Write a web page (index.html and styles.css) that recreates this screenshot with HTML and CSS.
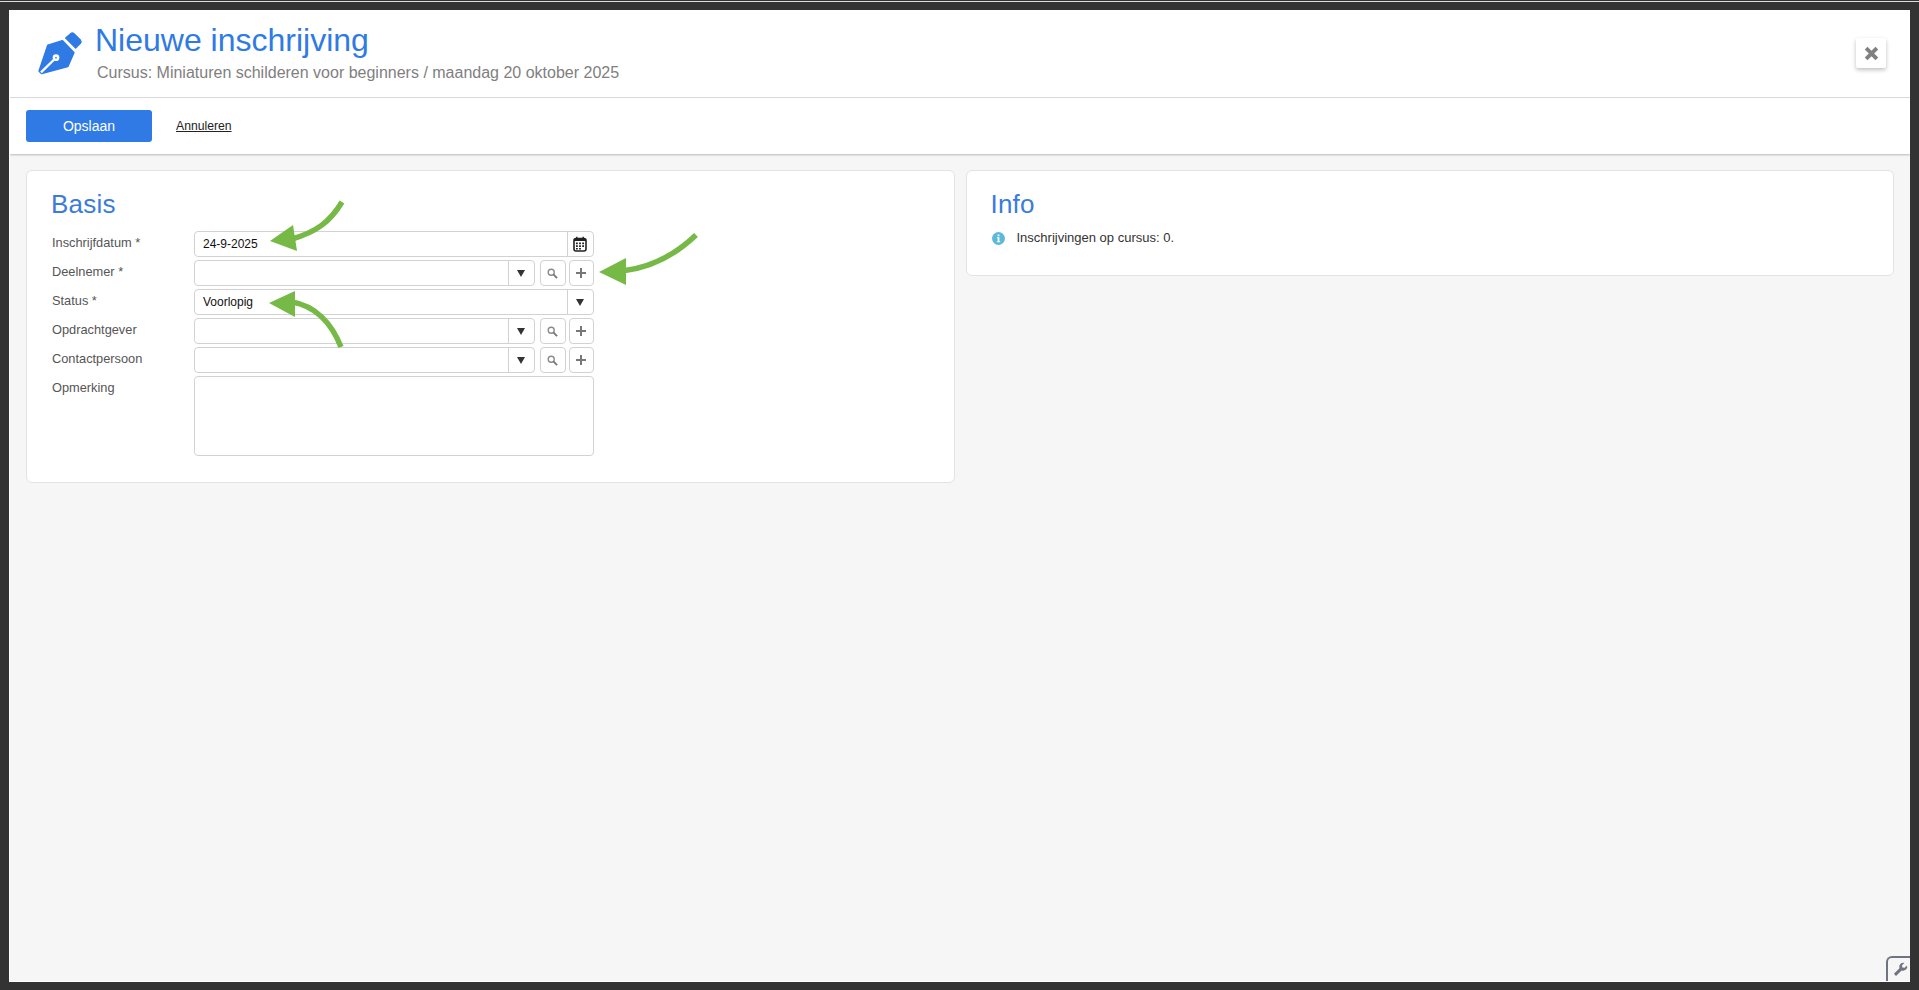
FILE: index.html
```html
<!DOCTYPE html>
<html>
  <head>
    <title>Nieuwe inschrijving</title>
    <link rel="stylesheet" href="styles.css">
  </head>
  <body>
    <div class="window">
      <div class="page-header">
        <svg class="page-icon" viewBox="0 0 210 210">
          <path d="M122 54 L137 41 Q142 37 147 41 L166 60 Q170 65 166 70 L152 84 Z" fill="#2f7ae5" stroke="#2f7ae5" stroke-width="4" stroke-linejoin="round"/>
          <path d="M69 76 L112 63 L146 98 L128 139 L50 160 L43 153 Z" fill="#2f7ae5" stroke="#2f7ae5" stroke-width="6" stroke-linejoin="round"/>
          <path d="M48 157 L86 120" stroke="#fff" stroke-width="7"/>
          <circle cx="93" cy="113" r="10" fill="#fff"/>
          <circle cx="93" cy="113" r="2.5" fill="#2f7ae5"/>
        </svg>
        <div class="page-titles">
          <h1>Nieuwe inschrijving</h1>
          <div class="subtitle">Cursus: Miniaturen schilderen voor beginners / maandag 20 oktober 2025</div>
        </div>
        <button class="close-btn" type="button">
          <svg viewBox="0 0 14 14" width="15" height="15"><path d="M2 2 L12 12 M12 2 L2 12" stroke="#808080" stroke-width="3.6"/></svg>
        </button>
      </div>

      <div class="toolbar">
        <button class="btn-primary" type="button">Opslaan</button>
        <a class="cancel-link" href="#">Annuleren</a>
      </div>

      <div class="content">
        <section class="card">
          <h2>Basis</h2>
          <form class="form">
            <label>Inschrijfdatum *</label>
            <div class="field">
              <div class="input-box">
                <span class="value">24-9-2025</span>
                <span class="addon">
                  <svg viewBox="0 0 14 16" width="14" height="16">
                    <rect x="1" y="2.5" width="12" height="12.5" rx="2" fill="none" stroke="#222" stroke-width="1.6"/>
                    <path d="M1 4h12" stroke="#222" stroke-width="2"/>
                    <path d="M3.8 .8v2.6M10.2 .8v2.6" stroke="#222" stroke-width="1.4"/>
                    <path d="M3 6.4h1.8v1.8H3zM6.1 6.4h1.8v1.8H6.1zM9.2 6.4H11v1.8H9.2zM3 9.3h1.8v1.8H3zM6.1 9.3h1.8v1.8H6.1zM9.2 9.3H11v1.8H9.2zM6.1 12h1.8v1.6H6.1zM3 12h1.8v1.6H3z" fill="#222"/>
                  </svg>
                </span>
              </div>
            </div>

            <label>Deelnemer *</label>
            <div class="field">
              <div class="input-box"><span class="value"></span><span class="addon"><i class="caret"></i></span></div>
              <span class="icon-btn search-btn"><svg viewBox="0 0 12 12" width="11" height="11"><circle cx="4.6" cy="4.6" r="3.3" fill="none" stroke="#8a8a8a" stroke-width="1.5"/><path d="M7 7l4 4" stroke="#777" stroke-width="2"/></svg></span>
              <span class="icon-btn"><svg viewBox="0 0 12 12" width="12" height="12"><path d="M6 1v10M1 6h10" stroke="#777" stroke-width="2"/></svg></span>
            </div>

            <label>Status *</label>
            <div class="field">
              <div class="input-box"><span class="value">Voorlopig</span><span class="addon"><i class="caret"></i></span></div>
            </div>

            <label>Opdrachtgever</label>
            <div class="field">
              <div class="input-box"><span class="value"></span><span class="addon"><i class="caret"></i></span></div>
              <span class="icon-btn search-btn"><svg viewBox="0 0 12 12" width="11" height="11"><circle cx="4.6" cy="4.6" r="3.3" fill="none" stroke="#8a8a8a" stroke-width="1.5"/><path d="M7 7l4 4" stroke="#777" stroke-width="2"/></svg></span>
              <span class="icon-btn"><svg viewBox="0 0 12 12" width="12" height="12"><path d="M6 1v10M1 6h10" stroke="#777" stroke-width="2"/></svg></span>
            </div>

            <label>Contactpersoon</label>
            <div class="field">
              <div class="input-box"><span class="value"></span><span class="addon"><i class="caret"></i></span></div>
              <span class="icon-btn search-btn"><svg viewBox="0 0 12 12" width="11" height="11"><circle cx="4.6" cy="4.6" r="3.3" fill="none" stroke="#8a8a8a" stroke-width="1.5"/><path d="M7 7l4 4" stroke="#777" stroke-width="2"/></svg></span>
              <span class="icon-btn"><svg viewBox="0 0 12 12" width="12" height="12"><path d="M6 1v10M1 6h10" stroke="#777" stroke-width="2"/></svg></span>
            </div>

            <label>Opmerking</label>
            <div class="textarea"></div>
          </form>
        </section>

        <section class="card info-card">
          <h2>Info</h2>
          <div class="info-line">
            <svg class="info-icon" viewBox="0 0 13 13" width="13" height="13">
              <circle cx="6.5" cy="6.5" r="6.5" fill="#5bb9dc"/>
              <path d="M5.6 2.6h1.8v1.6H5.6zM5 5.3h2.4v3.9h.8v1H4.9v-1h.8V6.3H5z" fill="#fff"/>
            </svg>
            <span>Inschrijvingen op cursus: 0.</span>
          </div>
        </section>
      </div>

      <button class="tools-btn" type="button">
        <svg viewBox="0 0 16 16" width="15" height="15"><path d="M15 3.6 L12.4 6.2 L10 5.8 L9.6 3.4 L12.2 1 A4.4 4.4 0 0 0 6.9 6.7 L1 12.6 L3.2 14.9 L9.2 9 A4.4 4.4 0 0 0 15 3.6 Z" fill="#6f7480"/></svg>
      </button>

      <!-- annotation arrows lying over the form -->
      <svg class="arrows" viewBox="0 0 1900 972" width="1900" height="972">
        <g fill="none" stroke="#76b947" stroke-width="5.5">
          <path d="M332 192 C320 212 306 222 282 229"/>
          <path d="M686 225 C664 246 640 258 612 261"/>
          <path d="M331 337 C322 314 306 296 282 292"/>
        </g>
        <g fill="#76b947">
          <path d="M260 231 L283 215 L287 241 Z"/>
          <path d="M589 262 L616 248 L616 275 Z"/>
          <path d="M259 293 L285 281 L285 307 Z"/>
        </g>
      </svg>
    </div>
  </body>
</html>
```

FILE: styles.css
```css
html {
  background-color: #333;
}

body {
  margin: 1px 0 0 0;
  padding: 8px 9px 8px 9px;
  border-top: 1px solid #ddd;
  font-family: "Liberation Sans", Arial, sans-serif;
  font-size: 12.8px;
  color: #333;
}

.window {
  position: relative;
  height: 972px;
  width: 1901px;
  box-sizing: border-box;
  background-color: #f6f6f6;
  border-left: 1px solid #fff;
  border-bottom: 1px solid #fff;
  overflow: hidden;
}

.page-header {
  display: flex;
  height: 88px;
  box-sizing: border-box;
  background-color: #fff;
  border-bottom: 1px solid #ddd;
}

.page-icon {
  width: 70px;
  height: 70px;
  margin: 10px 0 0 15px;
}

.page-titles {
  flex: 1;
}

h1 {
  margin: 12px 0 0 0;
  font-size: 32px;
  line-height: 36px;
  font-weight: normal;
  color: #2f7ae5;
}

.subtitle {
  margin: 5px 0 0 2px;
  font-size: 16px;
  line-height: 20px;
  color: #808080;
}

.close-btn {
  width: 30px;
  height: 30px;
  margin: 28px 24px 0 0;
  padding: 0;
  border: none;
  border-radius: 2px;
  background-color: #fff;
  box-shadow: 0 2px 4px rgba(0, 0, 0, 0.25);
  display: flex;
  align-items: center;
  justify-content: center;
}

.toolbar {
  display: flex;
  align-items: center;
  height: 56px;
  padding-left: 16px;
  background-color: #fff;
  box-shadow: 0 1px 2px rgba(0, 0, 0, 0.25);
}

.btn-primary {
  width: 126px;
  height: 32px;
  border: none;
  border-radius: 3px;
  background-color: #2f7ae5;
  color: #fff;
  font-family: inherit;
  font-size: 14px;
}

.cancel-link {
  margin-left: 24px;
  color: #222;
  font-size: 12.2px;
}

.content {
  display: grid;
  grid-template-columns: 1fr 1fr;
  align-items: start;
  gap: 11px;
  padding: 16px 16px 0 16px;
}

.card {
  box-sizing: border-box;
  height: 313px;
  padding: 17px 25px 0 25px;
  background-color: #fff;
  border: 1px solid #e3e3e3;
  border-radius: 6px;
}

.info-card {
  height: 106px;
}

h2 {
  margin: 0 0 0 -1px;
  font-size: 26px;
  line-height: 32px;
  font-weight: normal;
  letter-spacing: 0.2px;
  color: #3a7bdc;
}

.form {
  display: grid;
  grid-template-columns: 142px 400px;
  row-gap: 3px;
  margin-top: 11px;
}

.form label {
  line-height: 23px;
  color: #555;
}

.field {
  display: flex;
  height: 26px;
}

.input-box {
  flex: 1;
  display: flex;
  box-sizing: border-box;
  border: 1px solid #d2d2d2;
  border-radius: 4px;
}

.value {
  flex: 1;
  padding-left: 8px;
  font-size: 12px;
  line-height: 24px;
  color: #111;
}

.addon {
  width: 25.5px;
  display: flex;
  align-items: center;
  justify-content: center;
  border-left: 1px solid #d2d2d2;
}

.caret {
  width: 0;
  height: 0;
  border-left: 4px solid transparent;
  border-right: 4px solid transparent;
  border-top: 7px solid #333;
}

.icon-btn {
  box-sizing: border-box;
  width: 25.5px;
  margin-left: 3px;
  display: flex;
  align-items: center;
  justify-content: center;
  border: 1px solid #d2d2d2;
  border-radius: 4px;
}

.search-btn {
  margin-left: 5px;
}

.textarea {
  grid-column: 2;
  height: 80px;
  box-sizing: border-box;
  border: 1px solid #d2d2d2;
  border-radius: 4px;
}

.info-line {
  display: flex;
  align-items: center;
  gap: 12px;
  margin-top: 9px;
  font-size: 13px;
  line-height: 18px;
}

.tools-btn {
  position: absolute;
  right: 0;
  bottom: 0;
  box-sizing: border-box;
  width: 24px;
  height: 25px;
  padding: 2px 0 0 2px;
  border: none;
  border-top: 2px solid #6f7480;
  border-left: 2px solid #6f7480;
  border-top-left-radius: 6px;
  background-color: #f6f6f6;
}

.arrows {
  position: absolute;
  left: 0;
  top: 0;
  pointer-events: none;
}
```
